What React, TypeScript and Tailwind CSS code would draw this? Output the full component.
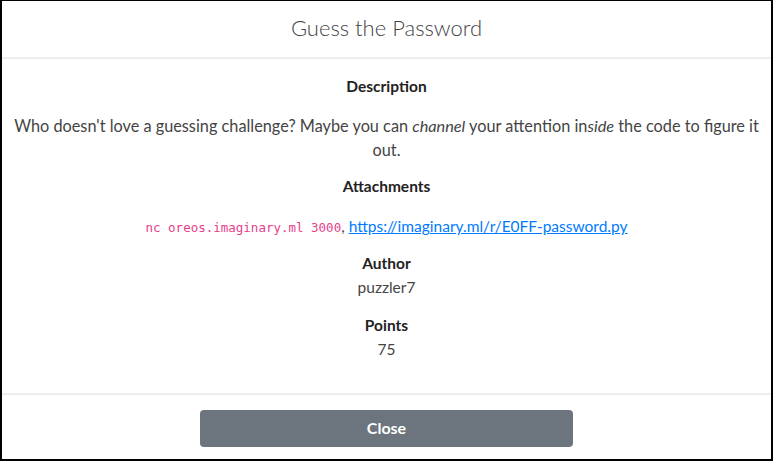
import React from "react";

export default function App() {
  const body = { fontFamily: "Lato, 'Open Sans', sans-serif" };
  return (
    <div className="w-[773px] h-[461px] bg-white border-t border-l-2 border-r-2 border-b-2 border-black flex flex-col text-[#212529]" style={body}>
      <div className="h-[58px] flex items-center justify-center border-b-2 border-[#eeeeee]">
        <h1 className="text-[22px] font-light text-[#444] mb-[3px]" style={{ fontFamily: "Lato, sans-serif" }}>Guess the Password</h1>
      </div>
      <div className="flex-1 flex flex-col items-center text-center px-3 pt-[15px] text-[16.3px] leading-[24px]">
        <div className="font-bold text-[#222] text-[15.5px]">Description</div>
        <p className="mt-[16px] text-[#444]">
          Who doesn't love a guessing challenge? Maybe you can <em>channel</em> your attention in<em>side</em> the code to figure it out.
        </p>
        <div className="mt-[12px] font-bold text-[#222] text-[15.5px]">Attachments</div>
        <div className="mt-[16px] text-[#444] text-[15.5px]">
          <code className="text-[12.5px] text-[#e83e8c]" style={{ fontFamily: "'DejaVu Sans Mono', monospace" }}>nc oreos.imaginary.ml 3000</code>
          , <a className="text-[#007bff] underline" href="#">https://imaginary.ml/r/E0FF-password.py</a>
        </div>
        <div className="mt-[11px] font-bold text-[#222] text-[15.5px]">Author</div>
        <div className="text-[#444] text-[15.5px]">puzzler7</div>
        <div className="mt-[14px] font-bold text-[#222] text-[15.5px]">Points</div>
        <div className="text-[#444] text-[15.5px]">75</div>
      </div>
      <div className="h-[66px] border-t-2 border-[#eeeeee] flex items-center justify-center">
        <button className="w-[373px] h-[37px] mt-[2px] rounded-[4px] bg-[#6c757d] text-white text-[16px] font-bold">Close</button>
      </div>
    </div>
  );
}
